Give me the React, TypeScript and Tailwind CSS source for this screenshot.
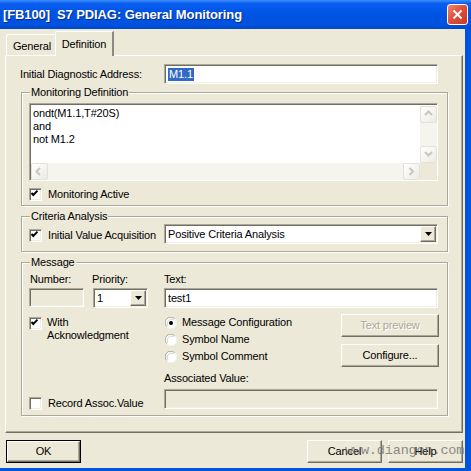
import React from 'react';

const sunken =
  'border border-t-[#aca899] border-l-[#aca899] border-r-white border-b-white shadow-[inset_1px_1px_0_#716f64,inset_-1px_-1px_0_#f1efe2]';
const raised =
  'border border-t-white border-l-white border-r-[#716f64] border-b-[#716f64] shadow-[inset_-1px_-1px_0_#aca899]';
const etched = 'relative border border-[#aca899] shadow-[inset_1px_1px_0_#fff,1px_1px_0_#fff]';

function Legend({ children }: { children: React.ReactNode }) {
  return (
    <span className="absolute -top-[7px] left-[8px] px-[1px] bg-[#ece9d8] leading-[13px]">{children}</span>
  );
}

function CheckBox({ checked }: { checked?: boolean }) {
  return (
    <div className={`w-[13px] h-[13px] shrink-0 bg-white ${sunken}`}>
      {checked && (
        <svg width="11" height="11" viewBox="0 0 11 11" className="-mt-px -ml-px">
          <path d="M2.5 5 L4.3 7 L8.5 2.6" fill="none" stroke="#000" strokeWidth="1.9" />
        </svg>
      )}
    </div>
  );
}

function Radio({ checked }: { checked?: boolean }) {
  return (
    <svg width="12" height="12" viewBox="0 0 12 12" className="shrink-0">
      <circle cx="6" cy="6" r="5.5" fill="#fff" />
      <path d="M1.8 9.6 A5.3 5.3 0 0 1 9.6 1.8" fill="none" stroke="#aca899" strokeWidth="1" />
      <path d="M2.8 8.6 A4.2 4.2 0 0 1 8.6 2.8" fill="none" stroke="#d6d3c6" strokeWidth="1" />
      <path d="M10.2 2.4 A5.3 5.3 0 0 1 2.4 10.2" fill="none" stroke="#f4f3ee" strokeWidth="1" />
      {checked && <circle cx="6" cy="6" r="2" fill="#000" />}
    </svg>
  );
}

function DropButton() {
  return (
    <div className={`w-[16px] h-[16px] bg-[#ece9d8] flex items-center justify-center ${raised}`}>
      <svg width="7" height="4" viewBox="0 0 7 4">
        <path d="M0 0 H7 L3.5 4 Z" fill="#000" />
      </svg>
    </div>
  );
}

function ScrollBtn({ dir }: { dir: 'up' | 'down' | 'left' | 'right' }) {
  const d = {
    up: 'M2 6 L5.5 2.5 L9 6',
    down: 'M2 3 L5.5 6.5 L9 3',
    left: 'M6 2 L2.5 5.5 L6 9',
    right: 'M3.5 2 L7 5.5 L3.5 9',
  }[dir];
  return (
    <div className="w-[17px] h-[17px] shrink-0 rounded-[2px] border border-[#e3e2da] bg-[linear-gradient(135deg,#ffffff,#eceae2)] flex items-center justify-center">
      <svg width="11" height="11" viewBox="0 0 11 11">
        <path d={d} fill="none" stroke="#c9c7bb" strokeWidth="2" />
      </svg>
    </div>
  );
}

function Button({ children, disabled, def, className = '' }: { children: React.ReactNode; disabled?: boolean; def?: boolean; className?: string }) {
  const inner = (
    <div
      className={`h-full w-full flex items-center justify-center bg-[#ece9d8] ${raised} ${
        disabled ? 'text-[#aca899] [text-shadow:1px_1px_0_#fff]' : 'text-black'
      }`}
    >
      {children}
    </div>
  );
  if (def) return <div className={`border border-black ${className}`}>{inner}</div>;
  return <div className={className}>{inner}</div>;
}

export default function App() {
  return (
    <div className="relative w-[471px] h-[471px] bg-[#0052e0] flex flex-col overflow-hidden font-['Liberation_Sans',Arial,sans-serif] text-[11px] leading-[13px] text-black tracking-[-0.15px]">
      {/* title bar */}
      <div className="h-[29px] shrink-0 flex items-center justify-between pl-[3px] pr-[3px] bg-[linear-gradient(180deg,#3d8eff_0%,#0a5ef0_12%,#0054e3_45%,#0052df_85%,#0047c8_100%)]">
        <span className="text-white font-bold text-[13px] tracking-[-0.1px] [text-shadow:1px_1px_0_#0a2a8a] whitespace-pre">
          [FB100]  S7 PDIAG: General Monitoring
        </span>
        <div className="w-[21px] h-[21px] rounded-[3px] border border-white bg-[linear-gradient(135deg,#f2896e,#e0503a_45%,#c8391f)] flex items-center justify-center">
          <svg width="11" height="11" viewBox="0 0 11 11">
            <path d="M1.5 1.5 L9.5 9.5 M9.5 1.5 L1.5 9.5" stroke="#fff" strokeWidth="2" />
          </svg>
        </div>
      </div>

      {/* dialog body */}
      <div className="w-[465px] h-[439px] bg-[#ece9d8] flex flex-col">
        {/* tabs */}
        <div className="h-[26px] flex items-end pl-[6px]">
          <div className="w-[49px] h-[21px] border-t border-l border-white rounded-tl-[3px] flex items-center justify-center pt-[2px] pl-[2px]">
            General
          </div>
          <div className="relative top-px z-10 w-[59px] h-[25px] bg-[#ece9d8] border-t border-l border-white border-r-2 border-r-[#8c8a80] rounded-tl-[2px] flex items-start justify-center pt-[6px]">
            Definition
          </div>
        </div>

        {/* tab panel */}
        <div className="ml-[5px] w-[458px] h-[378px] border-t border-l border-white border-r border-b border-r-[#716f64] border-b-[#716f64] shadow-[inset_-1px_-1px_0_#aca899] flex flex-col pl-[15px] pt-[8px]">
          <div className="flex items-center h-[20px]">
            <span className="w-[144px] -ml-px">Initial Diagnostic Address:</span>
            <div className={`w-[274px] h-[20px] bg-white flex items-center pl-[3px] ${sunken}`}>
              <span className="bg-[#316ac5] text-white px-px">M1.1</span>
            </div>
          </div>

          {/* Monitoring Definition */}
          <div className={`mt-[8px] w-[427px] h-[114px] pl-[7px] pt-[10px] ${etched}`}>
            <Legend>Monitoring Definition</Legend>
            <div className={`w-[409px] h-[78px] bg-white flex flex-col ${sunken}`}>
              <div className="flex flex-1 pl-[2px] pt-[2px]">
                <div className="flex-1 pl-[1px] pt-px">
                  <div>ondt(M1.1,T#20S)</div>
                  <div>and</div>
                  <div>not M1.2</div>
                </div>
                <div className="w-[17px] bg-[#f5f4ef] flex flex-col justify-between">
                  <ScrollBtn dir="up" />
                  <ScrollBtn dir="down" />
                </div>
              </div>
              <div className="flex h-[17px] ml-px">
                <div className="flex-1 bg-[#f5f4ef] flex justify-between">
                  <ScrollBtn dir="left" />
                  <ScrollBtn dir="right" />
                </div>
                <div className="w-[17px] bg-[#ece9d8]" />
              </div>
            </div>
            <div className="flex items-center mt-[7px]">
              <CheckBox checked />
              <span className="ml-[6px]">Monitoring Active</span>
            </div>
          </div>

          {/* Criteria Analysis */}
          <div className={`mt-[10px] w-[427px] h-[36px] pl-[7px] pt-[7px] ${etched}`}>
            <Legend>Criteria Analysis</Legend>
            <div className="flex items-center">
              <div className="w-[135px] flex items-center pt-[3px]">
                <CheckBox checked />
                <span className="ml-[6px]">Initial Value Acquisition</span>
              </div>
              <div className={`w-[274px] h-[20px] bg-white flex items-center justify-between pl-[3px] pr-px ${sunken}`}>
                <span>Positive Criteria Analysis</span>
                <DropButton />
              </div>
            </div>
          </div>

          {/* Message */}
          <div className={`mt-[10px] w-[427px] h-[154px] pl-[7px] pt-[10px] ${etched}`}>
            <Legend>Message</Legend>
            <div className="flex h-[13px]">
              <span className="w-[63px] pl-px">Number:</span>
              <span className="w-[72px]">Priority:</span>
              <span>Text:</span>
            </div>
            <div className="flex mt-[2px] h-[20px]">
              <div className={`w-[55px] h-[19px] bg-[#ece9d8] ${sunken}`} />
              <div className={`ml-[9px] w-[55px] h-[20px] bg-white flex items-center justify-between pl-[3px] pr-px ${sunken}`}>
                <span>1</span>
                <DropButton />
              </div>
              <div className={`ml-[16px] w-[274px] h-[20px] bg-white flex items-center pl-[3px] ${sunken}`}>test1</div>
            </div>

            <div className="flex mt-[6px] h-[95px]">
              <div className="w-[135px] flex flex-col">
                <div className="flex items-start mt-[3px]">
                  <CheckBox checked />
                  <span className="ml-[5px] -mt-px">
                    With
                    <br />
                    Acknowledgment
                  </span>
                </div>
                <div className="flex items-center mt-auto -mb-px">
                  <CheckBox />
                  <span className="ml-[6px]">Record Assoc.Value</span>
                </div>
              </div>
              <div className="w-[275px] flex flex-col">
                <div className="flex justify-between">
                  <div className="flex flex-col pl-px">
                    {[
                      { label: 'Message Configuration', on: true },
                      { label: 'Symbol Name', on: false },
                      { label: 'Symbol Comment', on: false },
                    ].map(r => (
                      <div key={r.label} className="flex items-center h-[17px]">
                        <Radio checked={r.on} />
                        <span className="ml-[5px]">{r.label}</span>
                      </div>
                    ))}
                  </div>
                  <div className="flex flex-col gap-[7px]">
                    <Button disabled className="w-[98px] h-[23px]">Text preview</Button>
                    <Button className="w-[98px] h-[23px]">Configure...</Button>
                  </div>
                </div>
                <div className="mt-[5px]">Associated Value:</div>
                <div className={`mt-[4px] w-[274px] h-[20px] bg-[#ece9d8] ${sunken}`} />
              </div>
            </div>
          </div>
        </div>

        {/* bottom buttons */}
        <div className="flex mt-[7px] pl-[6px] pr-[2px]">
          <Button def className="w-[75px] h-[23px]">OK</Button>
          <div className="flex-1" />
          <Button className="w-[75px] h-[23px]">Cancel</Button>
          <Button className="ml-[6px] w-[75px] h-[23px]">Help</Button>
        </div>
      </div>

      <span className="absolute left-[345px] top-[443px] font-['Liberation_Mono','Courier_New',monospace] text-[13.5px] leading-[15px] text-[#6e6e6e]/80 whitespace-pre">
        www.diangon.com
      </span>
    </div>
  );
}
